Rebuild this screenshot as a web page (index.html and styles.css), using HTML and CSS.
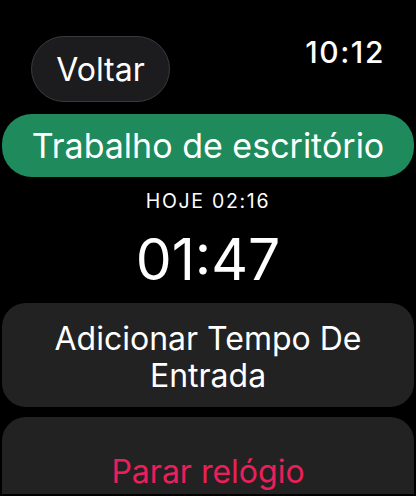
FILE: index.html
```html
<!DOCTYPE html>
<html>
    <head>
        <title>Relógio</title>
        <link rel="stylesheet" href="styles.css">
    </head>
    <body>
        <div class="topbar">
            <button class="back">Voltar</button>
            <span class="clock">10:12</span>
        </div>
        <div class="project">Trabalho de escritório</div>
        <p class="started">HOJE 02:16</p>
        <p class="elapsed">01:47</p>
        <button class="card">Adicionar Tempo De Entrada</button>
        <button class="card stop">Parar relógio</button>
    </body>
</html>
```
FILE: styles.css
```css
html, body {
    background-color: #000;
}
body {
    margin: 0;
    padding: 0 2px;
    overflow: hidden;
    height: 496px;
    font-family: Inter, "Noto Sans", sans-serif;
    color: #fff;
}
button {
    font-family: inherit;
    color: inherit;
    cursor: pointer;
}
.topbar {
    display: flex;
    justify-content: space-between;
    align-items: flex-start;
    padding: 36px 29px 0 29px;
}
.back {
    width: 139px;
    height: 66px;
    border-radius: 33px;
    border: 1.5px solid #3a3a3c;
    background-color: #1c1c1e;
    font-size: 32px;
    padding: 0;
}
.clock {
    font-size: 30px;
    font-weight: 500;
    margin-top: -2px;
    letter-spacing: 1.6px;
}
.project {
    margin-top: 12px;
    height: 63px;
    border-radius: 30px;
    background-color: #1f8a5b;
    display: flex;
    align-items: center;
    justify-content: center;
    font-size: 34px;
}
.started {
    margin: 13px 0 0;
    text-align: center;
    font-size: 19.5px;
    letter-spacing: 1.7px;
    line-height: 22px;
}
.elapsed {
    margin: 16px 0 0;
    text-align: center;
    font-size: 57px;
    line-height: 64px;
    font-weight: 400;
}
.card {
    display: block;
    width: 100%;
    margin-top: 11px;
    border: none;
    border-radius: 24px;
    background-color: #222222;
    font-size: 32px;
    line-height: 37px;
    padding: 17px 30px 13px;
}
.stop {
    margin-top: 10px;
    color: #eb1f5a;
    padding: 36px 30px 4px;
    border-radius: 24px 24px 0 0;
}
```
